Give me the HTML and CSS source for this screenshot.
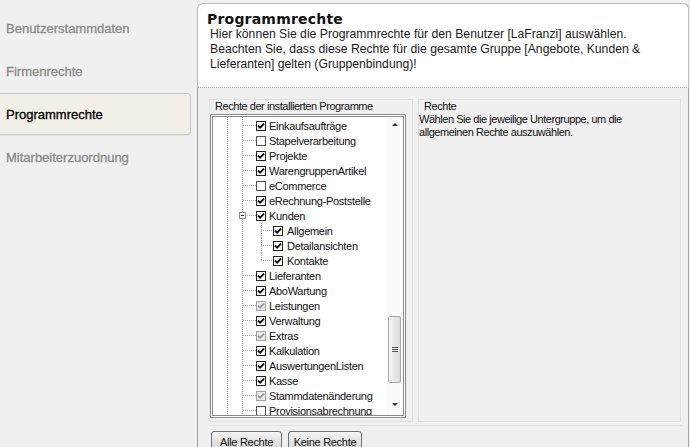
FILE: index.html
```html
<!DOCTYPE html>
<html lang="de">
<head>
<meta charset="utf-8">
<title>Programmrechte</title>
<link rel="stylesheet" href="styles.css">
</head>
<body>
<div class="app">
  <nav class="sidebar">
    <div class="nav-item">Benutzerstammdaten</div>
    <div class="nav-item">Firmenrechte</div>
    <div class="nav-item active">Programmrechte</div>
    <div class="nav-item">Mitarbeiterzuordnung</div>
  </nav>
  <main class="main">
    <header class="header">
      <h1 class="title">Programmrechte</h1>
      <p class="desc">Hier können Sie die Programmrechte für den Benutzer [LaFranzi] auswählen.<br>Beachten Sie, dass diese Rechte für die gesamte Gruppe [Angebote, Kunden &amp;<br>Lieferanten] gelten (Gruppenbindung)!</p>
    </header>
    <section class="body">
      <div class="panels">
        <div class="panel panel-tree">
          <div class="panel-label">Rechte der installierten Programme</div>
          <div class="treebox">
            <div class="tree">
              <div class="row"><span class="sp"></span><span class="hc"></span><span class="cb on"><svg viewBox="0 0 8 8"><path d="M1 3.6 L3.1 5.7 L7 1.6"/></svg></span><span class="lbl">Einkaufsaufträge</span></div>
              <div class="row"><span class="sp"></span><span class="hc"></span><span class="cb off"></span><span class="lbl">Stapelverarbeitung</span></div>
              <div class="row"><span class="sp"></span><span class="hc"></span><span class="cb on"><svg viewBox="0 0 8 8"><path d="M1 3.6 L3.1 5.7 L7 1.6"/></svg></span><span class="lbl">Projekte</span></div>
              <div class="row"><span class="sp"></span><span class="hc"></span><span class="cb on"><svg viewBox="0 0 8 8"><path d="M1 3.6 L3.1 5.7 L7 1.6"/></svg></span><span class="lbl">WarengruppenArtikel</span></div>
              <div class="row"><span class="sp"></span><span class="hc"></span><span class="cb off"></span><span class="lbl">eCommerce</span></div>
              <div class="row"><span class="sp"></span><span class="hc"></span><span class="cb on"><svg viewBox="0 0 8 8"><path d="M1 3.6 L3.1 5.7 L7 1.6"/></svg></span><span class="lbl">eRechnung-Poststelle</span></div>
              <div class="row"><span class="sp sp-exp"></span><span class="exp"></span><span class="hc hc-exp"></span><span class="cb on"><svg viewBox="0 0 8 8"><path d="M1 3.6 L3.1 5.7 L7 1.6"/></svg></span><span class="lbl">Kunden</span></div>
              <div class="row"><span class="sp sp-child"></span><span class="cc"></span><span class="cb on"><svg viewBox="0 0 8 8"><path d="M1 3.6 L3.1 5.7 L7 1.6"/></svg></span><span class="lbl lbl-child">Allgemein</span></div>
              <div class="row"><span class="sp sp-child"></span><span class="cc"></span><span class="cb on"><svg viewBox="0 0 8 8"><path d="M1 3.6 L3.1 5.7 L7 1.6"/></svg></span><span class="lbl lbl-child">Detailansichten</span></div>
              <div class="row"><span class="sp sp-child"></span><span class="cc last"></span><span class="cb on"><svg viewBox="0 0 8 8"><path d="M1 3.6 L3.1 5.7 L7 1.6"/></svg></span><span class="lbl lbl-child">Kontakte</span></div>
              <div class="row"><span class="sp"></span><span class="hc"></span><span class="cb on"><svg viewBox="0 0 8 8"><path d="M1 3.6 L3.1 5.7 L7 1.6"/></svg></span><span class="lbl">Lieferanten</span></div>
              <div class="row"><span class="sp"></span><span class="hc"></span><span class="cb on"><svg viewBox="0 0 8 8"><path d="M1 3.6 L3.1 5.7 L7 1.6"/></svg></span><span class="lbl">AboWartung</span></div>
              <div class="row"><span class="sp"></span><span class="hc"></span><span class="cb gray"><svg viewBox="0 0 8 8"><path d="M1 3.6 L3.1 5.7 L7 1.6"/></svg></span><span class="lbl">Leistungen</span></div>
              <div class="row"><span class="sp"></span><span class="hc"></span><span class="cb on"><svg viewBox="0 0 8 8"><path d="M1 3.6 L3.1 5.7 L7 1.6"/></svg></span><span class="lbl">Verwaltung</span></div>
              <div class="row"><span class="sp"></span><span class="hc"></span><span class="cb gray"><svg viewBox="0 0 8 8"><path d="M1 3.6 L3.1 5.7 L7 1.6"/></svg></span><span class="lbl">Extras</span></div>
              <div class="row"><span class="sp"></span><span class="hc"></span><span class="cb on"><svg viewBox="0 0 8 8"><path d="M1 3.6 L3.1 5.7 L7 1.6"/></svg></span><span class="lbl">Kalkulation</span></div>
              <div class="row"><span class="sp"></span><span class="hc"></span><span class="cb on"><svg viewBox="0 0 8 8"><path d="M1 3.6 L3.1 5.7 L7 1.6"/></svg></span><span class="lbl">AuswertungenListen</span></div>
              <div class="row"><span class="sp"></span><span class="hc"></span><span class="cb on"><svg viewBox="0 0 8 8"><path d="M1 3.6 L3.1 5.7 L7 1.6"/></svg></span><span class="lbl">Kasse</span></div>
              <div class="row"><span class="sp"></span><span class="hc"></span><span class="cb gray"><svg viewBox="0 0 8 8"><path d="M1 3.6 L3.1 5.7 L7 1.6"/></svg></span><span class="lbl">Stammdatenänderung</span></div>
              <div class="row"><span class="sp"></span><span class="hc"></span><span class="cb off"></span><span class="lbl">Provisionsabrechnung</span></div>
            </div>
            <div class="scrollbar">
              <div class="sb-btn"><span class="arrow-up"></span></div>
              <div class="sb-track"><div class="sb-thumb"><span class="grip"></span></div></div>
              <div class="sb-btn sb-btn-down"><span class="arrow-down"></span></div>
            </div>
          </div>
        </div>
        <div class="panel panel-info">
          <div class="panel-label">Rechte</div>
          <p class="info">Wählen Sie die jeweilige Untergruppe, um die<br>allgemeinen Rechte auszuwählen.</p>
        </div>
      </div>
      <div class="buttons">
        <button class="btn btn-all">Alle Rechte</button>
        <button class="btn btn-none">Keine Rechte</button>
      </div>
    </section>
  </main>
</div>
</body>
</html>
```

FILE: styles.css
```css
html, body {
  margin: 0;
  padding: 0;
}
body {
  width: 690px;
  height: 447px;
  overflow: hidden;
  background: #f0f0f0;
  font-family: "Liberation Sans", Arial, sans-serif;
  color: #000;
}
.app {
  display: flex;
  height: 447px;
}

/* Sidebar */
.sidebar {
  width: 197px;
  flex: none;
  padding-top: 7px;
  box-sizing: border-box;
}
.nav-item {
  width: 191px;
  height: 42px;
  margin-bottom: 1px;
  box-sizing: border-box;
  display: flex;
  align-items: center;
  padding-left: 6px;
  font-size: 13px;
  color: #8a8a8a;
  -webkit-text-stroke: 0.3px currentColor;
}
.nav-item.active {
  color: #000;
  background: #f2efe7;
  border: 1px solid #c9c9c4;
  border-left: none;
  border-radius: 0 4px 4px 0;
  box-shadow: 0 1px 1px rgba(0,0,0,0.06);
}

/* Main */
.main {
  width: 492px;
  flex: none;
  padding-top: 3px;
  box-sizing: border-box;
  display: flex;
  flex-direction: column;
  overflow: hidden;
}
.header {
  flex: none;
  height: 85px;
  box-sizing: border-box;
  background: #fff;
  border: 1px solid #bdbdbd;
  border-bottom: 1px dotted #a5a5a5;
  border-radius: 6px 6px 0 0;
  padding: 8px 8px 0 9px;
  box-shadow: 1px 0 0 #dcdcdc;
}
.title {
  margin: 0;
  font-family: "DejaVu Sans", Verdana, sans-serif;
  font-size: 14px;
  letter-spacing: 0.2px;
  line-height: 15px;
  font-weight: bold;
  color: #111;
}
.desc {
  margin: 0 0 0 3px;
  font-size: 12.2px;
  line-height: 15px;
  color: #1a1a1a;
}
.body {
  flex: none;
  height: 359px;
  border-left: 1px solid #a3a3a3;
  border-right: 1px solid #a3a3a3;
  padding: 11px 6px 0 11px;
  display: flex;
  flex-direction: column;
}
.panels {
  display: flex;
  gap: 5px;
  height: 323px;
  flex: none;
}
.panel {
  box-sizing: border-box;
  border: 1px solid #e1e1e1;
  height: 323px;
}
.panel-tree {
  width: 204px;
}
.panel-info {
  width: 263px;
}
.panel-label {
  font-size: 11px;
  line-height: 13px;
  height: 13px;
  padding-left: 5px;
  letter-spacing: -0.45px;
  color: #111;
}
.info {
  margin: 0;
  font-size: 11px;
  line-height: 13px;
  letter-spacing: -0.45px;
  color: #111;
}

/* Tree box */
.treebox {
  margin-top: 1px;
  width: 196px;
  height: 304px;
  box-sizing: border-box;
  border: 3px double #8a8a8a;
  background: #fff;
  display: flex;
  overflow: hidden;
}
.tree {
  flex: 1;
  padding-top: 1px;
  overflow: hidden;
  background-image:
    linear-gradient(#a3a3a3 50%, transparent 50%),
    linear-gradient(#a3a3a3 50%, transparent 50%);
  background-size: 1px 2px, 1px 2px;
  background-position: 14px 0, 29px 0;
  background-repeat: repeat-y, repeat-y;
}
.row {
  display: flex;
  align-items: center;
  height: 15px;
  white-space: nowrap;
  font-size: 11px;
  letter-spacing: -0.3px;
  color: #111;
}
.sp {
  width: 29px;
  height: 15px;
  flex: none;
}
.sp-exp {
  width: 26px;
}
.sp-child {
  width: 48px;
}
.hc {
  width: 14px;
  height: 15px;
  flex: none;
  background-image: linear-gradient(to right, #a3a3a3 50%, transparent 50%);
  background-size: 2px 1px;
  background-position: 1px 7px;
  background-repeat: repeat-x;
}
.hc-exp {
  width: 10px;
}
.exp {
  width: 7px;
  height: 7px;
  box-sizing: border-box;
  border: 1px solid #8e8e8e;
  background: #fff;
  flex: none;
  display: flex;
  align-items: center;
  justify-content: center;
}
.exp::after {
  content: "";
  width: 3px;
  height: 1px;
  background: #222;
}
.cc {
  width: 12px;
  height: 15px;
  flex: none;
  position: relative;
  background-image: linear-gradient(to right, #a3a3a3 50%, transparent 50%);
  background-size: 2px 1px;
  background-position: 0 7px;
  background-repeat: repeat-x;
}
.cc::before {
  content: "";
  position: absolute;
  left: 0;
  top: 0;
  bottom: 0;
  width: 1px;
  background-image: linear-gradient(#a3a3a3 50%, transparent 50%);
  background-size: 1px 2px;
}
.cc.last::before {
  bottom: 7px;
}
.cb {
  width: 10px;
  height: 10px;
  box-sizing: border-box;
  flex: none;
  border: 1px solid #222;
  background: #fff;
  display: flex;
  align-items: center;
  justify-content: center;
}
.cb svg {
  width: 8px;
  height: 8px;
  fill: none;
  stroke: #000;
  stroke-width: 1.8;
}
.cb.off {
  border-color: #555;
}
.cb.gray {
  border-color: #a2a2a2;
  background: #e9e9e9;
}
.cb.gray svg {
  stroke: #9a9a9a;
}
.lbl {
  margin-left: 3px;
}
.lbl-child {
  margin-left: 4px;
}

/* Scrollbar */
.scrollbar {
  width: 16px;
  flex: none;
  display: flex;
  flex-direction: column;
  background: #fbfbfb;
}
.sb-btn {
  height: 15px;
  flex: none;
  display: flex;
  align-items: center;
  justify-content: center;
}
.sb-btn-down {
  align-items: flex-start;
  padding-top: 3px;
  box-sizing: border-box;
}
.arrow-up {
  width: 0;
  height: 0;
  border-left: 3px solid transparent;
  border-right: 3px solid transparent;
  border-bottom: 3px solid #333;
}
.arrow-down {
  width: 0;
  height: 0;
  border-left: 3px solid transparent;
  border-right: 3px solid transparent;
  border-top: 3px solid #333;
}
.sb-track {
  flex: 1;
}
.sb-thumb {
  margin: 184px 0 0 1px;
  width: 13px;
  height: 67px;
  box-sizing: border-box;
  border: 1px solid #a9a9a9;
  border-radius: 2px;
  background: linear-gradient(to right, #f6f6f6, #dcdcdc);
  display: flex;
  align-items: center;
  justify-content: center;
}
.grip {
  width: 6px;
  height: 5px;
  background-image: linear-gradient(#555 1px, transparent 1px);
  background-size: 6px 2px;
}

/* Buttons */
.buttons {
  margin-top: 3px;
  border-top: 1px solid #e3e3e3;
  padding-top: 5px;
  display: flex;
  gap: 6px;
  padding-left: 2px;
}
.btn {
  height: 21px;
  box-sizing: border-box;
  border: 1px solid #707070;
  border-radius: 3px;
  background: linear-gradient(#f4f4f4, #e2e2e2 55%, #d9d9d9);
  font-family: "Liberation Sans", Arial, sans-serif;
  font-size: 11px;
  letter-spacing: -0.3px;
  color: #111;
  padding: 0;
  line-height: 18px;
}
.btn-all {
  width: 71px;
}
.btn-none {
  width: 74px;
}
```
